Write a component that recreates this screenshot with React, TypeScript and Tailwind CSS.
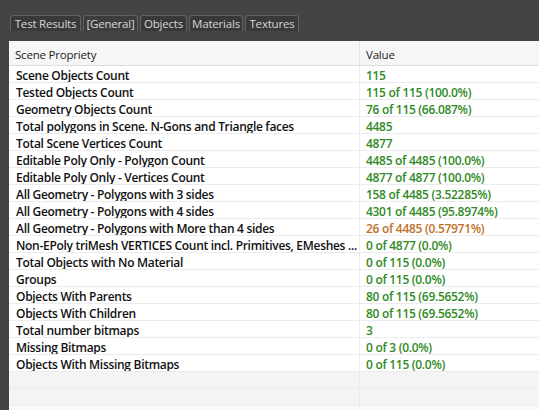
import React from "react";

const rows: [string, string, boolean?][] = [
  ["Scene Objects Count", "115"],
  ["Tested Objects Count", "115 of 115 (100.0%)"],
  ["Geometry Objects Count", "76 of 115 (66.087%)"],
  ["Total polygons in Scene. N-Gons and Triangle faces", "4485"],
  ["Total Scene Vertices Count", "4877"],
  ["Editable Poly Only - Polygon Count", "4485 of 4485 (100.0%)"],
  ["Editable Poly Only - Vertices Count", "4877 of 4877 (100.0%)"],
  ["All Geometry - Polygons with 3 sides", "158 of 4485 (3.52285%)"],
  ["All Geometry - Polygons with 4 sides", "4301 of 4485 (95.8974%)"],
  ["All Geometry - Polygons with More than 4 sides", "26 of 4485 (0.57971%)", true],
  ["Non-EPoly triMesh VERTICES Count incl. Primitives, EMeshes ...", "0 of 4877 (0.0%)"],
  ["Total Objects with No Material", "0 of 115 (0.0%)"],
  ["Groups", "0 of 115 (0.0%)"],
  ["Objects With Parents", "80 of 115 (69.5652%)"],
  ["Objects With Children", "80 of 115 (69.5652%)"],
  ["Total number bitmaps", "3"],
  ["Missing Bitmaps", "0 of 3 (0.0%)"],
  ["Objects With Missing Bitmaps", "0 of 115 (0.0%)"],
];

const tabs: [string, number][] = [
  ["Test Results", 71],
  ["[General]", 55],
  ["Objects", 47],
  ["Materials", 54],
  ["Textures", 54],
];

export default function App() {
  return (
    <div
      className="w-[539px] h-[410px] bg-[#444444] overflow-hidden flex flex-col"
      style={{ fontFamily: '"Open Sans", "Noto Sans", sans-serif' }}
    >
      <div className="h-[41px] flex items-end pl-[10px] pb-[10px] gap-[2px]">
        {tabs.map(([t, w], i) => (
          <div
            key={t}
            className={`h-[16px] flex items-center justify-center rounded-t-[3px] border border-b-0 border-[#626262] text-[11.5px] leading-none pt-[1px] text-[#d6d6d6] tracking-[-0.2px] ${
              i === 1 ? "bg-[#3d3d3d]" : "bg-[#393939]"
            }`}
            style={{ width: w }}
          >
            {t}
          </div>
        ))}
      </div>
      <div className="ml-[9px] flex-1 bg-white flex flex-col">
        <div className="h-[25px] flex bg-[#f6f6f6] border-b border-[#dedede] text-[11.5px] text-[#1a1a1a] tracking-[-0.2px]">
          <div className="w-[351px] pl-[6px] pt-[4px] flex items-center border-r border-[#e6e6e6]">
            Scene Propriety
          </div>
          <div className="flex-1 pl-[6px] pt-[4px] flex items-center">Value</div>
        </div>
        {rows.map(([k, v, warn]) => (
          <div
            key={k}
            className="h-[17px] flex border-b border-[#ececec] text-[12px] font-semibold tracking-[-0.3px]"
          >
            <div className="w-[351px] pl-[7px] pt-[3px] flex items-center border-r border-[#ededed] text-[#111] whitespace-nowrap overflow-hidden">
              {k}
            </div>
            <div
              className={`flex-1 pl-[6px] pt-[3px] flex items-center ${
                warn ? "text-[#c0702a]" : "text-[#2f8a1f]"
              }`}
            >
              {v}
            </div>
          </div>
        ))}
        <div className="h-[17px] flex bg-[#f4f4f4] border-b border-[#ebebeb]">
          <div className="w-[351px] border-r border-[#ececec]" />
        </div>
        <div className="h-[17px] flex bg-[#f4f4f4] border-b border-[#ebebeb]">
          <div className="w-[351px] border-r border-[#ececec]" />
        </div>
        <div className="flex-1 flex bg-[#fafafa]">
          <div className="w-[351px] border-r border-[#ececec]" />
        </div>
      </div>
    </div>
  );
}
